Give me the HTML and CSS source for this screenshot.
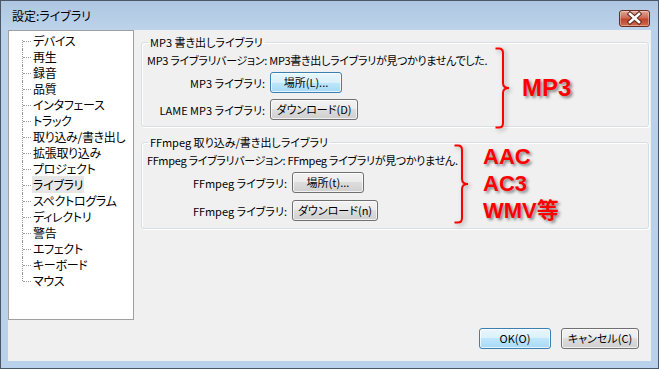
FILE: index.html
```html
<!DOCTYPE html>
<html lang="ja">

<head>
    <meta charset="UTF-8">
    <link rel="stylesheet" href="styles.css">
</head>

<body>

    <div class="window">
        <div class="titlebar">
            <span class="title">設定:ライブラリ</span>
            <div class="close">
                <svg width="31" height="17" viewBox="0 0 31 17">
                    <path d="M11 4 L20 12 M20 4 L11 12" stroke="#5a2a22" stroke-width="4.5" stroke-linecap="square" fill="none"/>
                    <path d="M11 4 L20 12 M20 4 L11 12" stroke="#fff" stroke-width="2.6" stroke-linecap="square" fill="none"/>
                </svg>
            </div>
        </div>

        <div class="client">
            <div class="main">
                <div class="tree">
                    <ul>
                        <li><span>デバイス</span></li>
                        <li><span>再生</span></li>
                        <li><span>録音</span></li>
                        <li><span>品質</span></li>
                        <li><span>インタフェース</span></li>
                        <li><span>トラック</span></li>
                        <li><span>取り込み/書き出し</span></li>
                        <li><span>拡張取り込み</span></li>
                        <li><span>プロジェクト</span></li>
                        <li class="selected"><span>ライブラリ</span></li>
                        <li><span>スペクトログラム</span></li>
                        <li><span>ディレクトリ</span></li>
                        <li><span>警告</span></li>
                        <li><span>エフェクト</span></li>
                        <li><span>キーボード</span></li>
                        <li><span>マウス</span></li>
                    </ul>
                </div>

                <div class="pages">
                    <fieldset class="group">
                        <legend>MP3 書き出しライブラリ</legend>
                        <div class="version version-tight">MP3 ライブラリバージョン: MP3書き出しライブラリが見つかりませんでした.</div>
                        <div class="form form-mp3">
                            <label>MP3 ライブラリ:</label>
                            <button class="btn btn-blue btn-browse">場所(L)...</button>
                            <label>LAME MP3 ライブラリ:</label>
                            <button class="btn btn-download">ダウンロード(D)</button>
                        </div>
                    </fieldset>

                    <fieldset class="group group-ffmpeg">
                        <legend>FFmpeg 取り込み/書き出しライブラリ</legend>
                        <div class="version version-tight">FFmpeg ライブラリバージョン: FFmpeg ライブラリが見つかりません.</div>
                        <div class="form form-ffmpeg">
                            <label>FFmpeg ライブラリ:</label>
                            <button class="btn btn-browse">場所(t)...</button>
                            <label>FFmpeg ライブラリ:</label>
                            <button class="btn btn-download btn-download-n">ダウンロード(n)</button>
                        </div>
                    </fieldset>
                </div>
            </div>

            <div class="actions">
                <button class="btn btn-blue btn-ok">OK(O)</button>
                <button class="btn btn-cancel">キャンセル(C)</button>
            </div>

            <!-- red notes drawn over the dialog -->
            <div class="note note-mp3">
                <svg class="brace" width="16" height="82" viewBox="0 0 16 82">
                    <path d="M1.5 1.5 H5 Q9 1.5 9 6 V36 Q9 41 15 41 Q9 41 9 46 V76 Q9 80.5 5 80.5 H1.5" stroke="#f00" stroke-width="2" fill="none"/>
                </svg>
                <span>MP3</span>
            </div>
            <div class="note note-ffmpeg">
                <svg class="brace" width="16" height="80" viewBox="0 0 16 80">
                    <path d="M1.5 1.5 H5 Q9 1.5 9 6 V35 Q9 40 15 40 Q9 40 9 45 V74 Q9 78.5 5 78.5 H1.5" stroke="#f00" stroke-width="2" fill="none"/>
                </svg>
                <div>AAC<br>AC3<br>WMV等</div>
            </div>
        </div>
    </div>

</body>

</html>
```

FILE: styles.css
```css
* {
    box-sizing: border-box;
}

body {
    margin: 0;
    font-family: "Noto Sans CJK JP", "Noto Sans", sans-serif;
    font-size: 11px;
    font-feature-settings: "palt";
    color: #000;
}

.window {
    width: 659px;
    height: 369px;
    border: 1px solid #4a5766;
    background: linear-gradient(#aec6e1, #bdd3eb 29px, #b9d1ea 29px);
    padding: 0 7px 7px;
    display: flex;
    flex-direction: column;
}

.titlebar {
    height: 29px;
    display: flex;
    justify-content: space-between;
    align-items: center;
    padding: 0 1px 0 4px;
}

.title {
    font-size: 12px;
    line-height: 16px;
}

.close {
    align-self: flex-start;
    margin-top: 9px;
    width: 31px;
    height: 17px;
    border: 1px solid #6b2d22;
    border-radius: 3px;
    background: linear-gradient(#e2a697, #cf6b54 45%, #c0442a 55%, #d06a4b);
    box-shadow: inset 0 0 0 1px rgba(255, 255, 255, 0.35);
    display: flex;
    align-items: center;
    justify-content: center;
}

.close svg {
    display: block;
    margin: -1px;
}

.client {
    flex: 1;
    background: #f0f0f0;
    position: relative;
    display: flex;
    flex-direction: column;
}

.main {
    display: flex;
    gap: 7px;
    height: 290px;
}

/* tree with dotted lines */
.tree {
    width: 126px;
    border: 1px solid #a0a0a0;
    background: #fff;
    padding-top: 2px;
    font-size: 12px;
    letter-spacing: -0.3px;
}

.tree ul {
    list-style: none;
    margin: 0;
    padding: 0 0 0 13px;
}

.tree li {
    position: relative;
    height: 16px;
    line-height: 16px;
    padding-left: 10px;
    white-space: nowrap;
}

.tree li::before {
    content: '';
    position: absolute;
    left: 0;
    top: 0;
    bottom: 0;
    border-left: 1px dotted #9a9a9a;
}

.tree li:first-child::before {
    top: 7px;
}

.tree li:last-child::before {
    bottom: 8px;
}

.tree li::after {
    content: '';
    position: absolute;
    left: 1px;
    top: 8px;
    width: 8px;
    border-top: 1px dotted #9a9a9a;
}

.tree li span {
    padding: 0 1px;
}

.tree li.selected span {
    background: #e6e6e6;
}

.pages {
    flex: 1;
    margin-right: 2px;
    padding-top: 4px;
    display: flex;
    flex-direction: column;
    gap: 7px;
}

.group {
    margin: 0;
    min-width: 0;
    border: 1px solid #d5dfe5;
    border-radius: 3px;
    padding: 0 5px 6px;
    box-shadow: inset 1px 1px 0 #fff, 1px 1px 0 #fff;
}

.group legend {
    padding: 0 2px;
    margin-left: 1px;
    line-height: 16px;
}

.version {
    margin-top: 2px;
    line-height: 16px;
    white-space: nowrap;
}

.version-tight {
    letter-spacing: -0.3px;
}

.form {
    display: grid;
    grid-template-columns: 118px auto;
    column-gap: 5px;
    row-gap: 6px;
    margin-top: 4px;
    justify-content: start;
    justify-items: start;
    align-items: center;
}

.form label {
    justify-self: end;
    white-space: nowrap;
}

.form-ffmpeg {
    grid-template-columns: 140px auto;
    row-gap: 7px;
}

.group-ffmpeg {
    padding-bottom: 7px;
}

.btn {
    height: 21px;
    padding: 0;
    font-family: inherit;
    font-size: 11px;
    font-feature-settings: "palt";
    line-height: 19px;
    color: #000;
    border: 1px solid #707070;
    border-radius: 3px;
    background: linear-gradient(#f2f2f2, #ebebeb 50%, #dddddd 50%, #cfcfcf);
    box-shadow: inset 0 0 0 1px rgba(255, 255, 255, 0.7);
    white-space: nowrap;
}

.btn-blue {
    border-color: #3c7fb1;
    background: linear-gradient(#eaf6fd, #d9f0fc 50%, #bee6fd 50%, #a7d9f5);
}

.btn-browse,
.btn-ok {
    width: 72px;
}

.btn-download {
    width: 88px;
}

.btn-download-n {
    width: 86px;
}

.btn-cancel {
    width: 78px;
}

.actions {
    display: flex;
    justify-content: flex-end;
    gap: 10px;
    padding: 8px 12px 0 0;
}

/* annotations */
.note {
    position: absolute;
    display: flex;
    align-items: center;
    color: #f00;
    font-family: "Liberation Sans", "Noto Sans CJK JP", sans-serif;
    font-weight: bold;
    font-feature-settings: normal;
    text-shadow: 2px 2px 3px rgba(0, 0, 0, 0.45);
}

.note .brace {
    display: block;
    filter: drop-shadow(2px 2px 2px rgba(0, 0, 0, 0.3));
}

.note-mp3 {
    left: 486px;
    top: 17px;
    gap: 12px;
    font-size: 24px;
}

.note-ffmpeg {
    left: 445px;
    top: 113px;
    gap: 14px;
    font-size: 22px;
    line-height: 27px;
}
```
